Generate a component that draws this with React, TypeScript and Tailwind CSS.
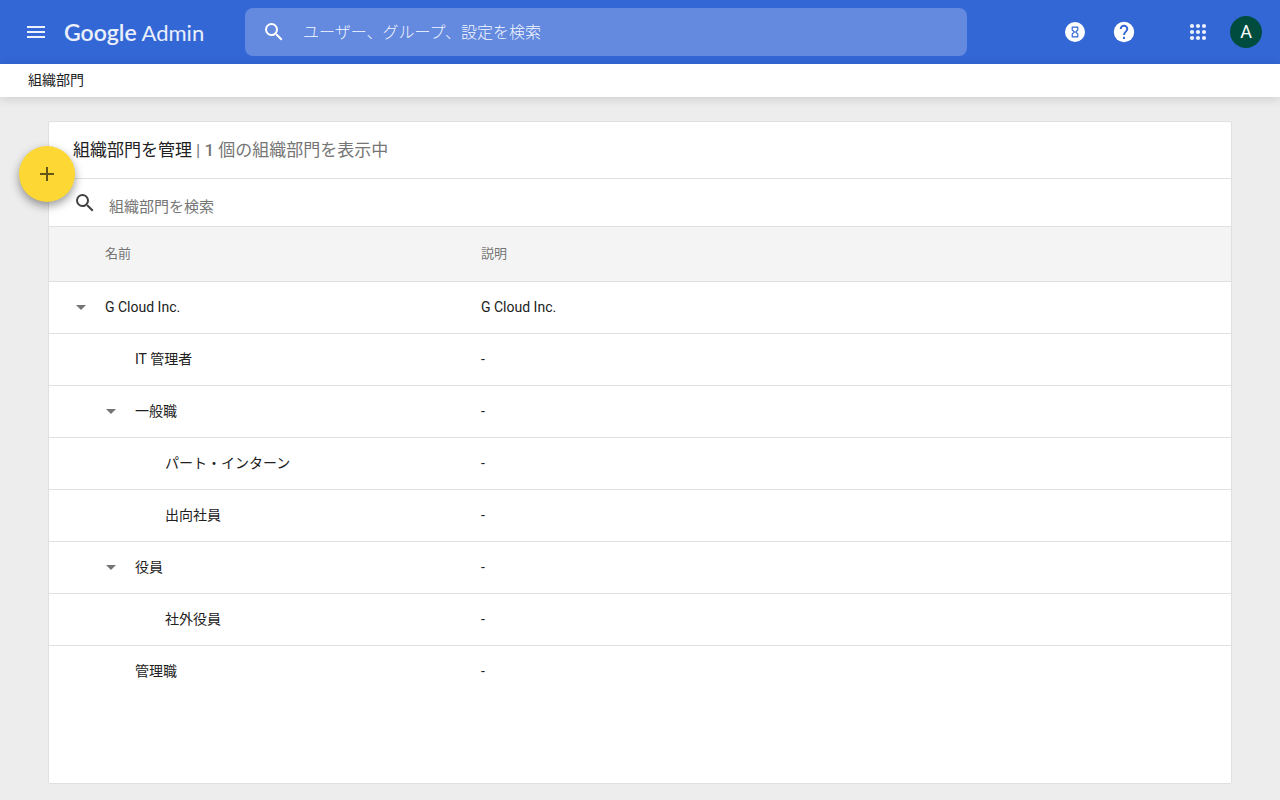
import { MdAdd, MdArrowDropDown, MdMenu, MdSearch } from "react-icons/md";

type OrgUnit = {
  name: string;
  description: string;
  level: 0 | 1 | 2;
  expanded?: boolean;
};

const orgUnits: OrgUnit[] = [
  { name: "G Cloud Inc.", description: "G Cloud Inc.", level: 0, expanded: true },
  { name: "IT 管理者", description: "-", level: 1 },
  { name: "一般職", description: "-", level: 1, expanded: true },
  { name: "パート・インターン", description: "-", level: 2 },
  { name: "出向社員", description: "-", level: 2 },
  { name: "役員", description: "-", level: 1, expanded: true },
  { name: "社外役員", description: "-", level: 2 },
  { name: "管理職", description: "-", level: 1 },
];

const indent = {
  0: "pl-5",
  1: "pl-[50px]",
  2: "pl-20",
};

function HourglassIcon() {
  return (
    <svg viewBox="0 0 24 24" className="size-6" aria-hidden="true">
      <circle cx="12" cy="12" r="10" fill="#fff" />
      <path
        d="M9.2 7.2h5.6v2.6L12.7 12l2.1 2.2v2.6H9.2v-2.6l2.1-2.2-2.1-2.2z"
        fill="none"
        stroke="#3367d6"
        strokeWidth="1.2"
        strokeLinejoin="round"
      />
    </svg>
  );
}

function HelpIcon() {
  return (
    <svg viewBox="0 0 24 24" className="size-6" aria-hidden="true">
      <circle cx="12" cy="12" r="10.2" fill="#fff" />
      <path
        d="M8.7 9a3.3 3.3 0 0 1 6.6 0c0 2.5-3.3 2.8-3.3 6"
        fill="none"
        stroke="#3367d6"
        strokeWidth="1.9"
      />
      <rect x="11" y="16.8" width="2" height="2.2" fill="#3367d6" />
    </svg>
  );
}

function AppsIcon() {
  return (
    <svg viewBox="0 0 24 24" className="size-6" fill="currentColor" aria-hidden="true">
      {[6, 12, 18].map((cy) =>
        [6, 12, 18].map((cx) => <circle key={`${cx}-${cy}`} cx={cx} cy={cy} r="2.1" />)
      )}
    </svg>
  );
}

function Header() {
  return (
    <header className="flex h-16 items-center bg-[#3367d6] pr-[18px] pl-6 text-white">
      <div className="flex w-[221px] shrink-0 items-center gap-4">
        <button type="button" aria-label="メインメニュー" className="text-white/90">
          <MdMenu className="size-6" />
        </button>
        <a
          href="#"
          className="font-['Lato','Liberation_Sans',sans-serif] text-[22px] leading-8 whitespace-nowrap text-white/90"
        >
          <span className="text-[23px] font-semibold">Google</span> Admin
        </a>
      </div>

      <label className="flex h-12 max-w-[722px] flex-1 items-center gap-[17px] rounded-lg bg-[#648adf] pl-[17px]">
        <MdSearch className="size-6 shrink-0" />
        <input
          type="text"
          aria-label="検索"
          placeholder="ユーザー、グループ、設定を検索"
          className="h-full min-w-0 flex-1 bg-transparent text-base font-light outline-none placeholder:text-white/95"
        />
      </label>

      <div className="ml-auto flex items-center">
        <button type="button" aria-label="タスク">
          <HourglassIcon />
        </button>
        <button type="button" aria-label="ヘルプ" className="ml-[25px]">
          <HelpIcon />
        </button>
        <button type="button" aria-label="アプリ" className="ml-[50px] text-white/90">
          <AppsIcon />
        </button>
        <button
          type="button"
          aria-label="アカウント"
          className="ml-5 flex size-8 items-center justify-center rounded-full bg-[#004d40] text-lg"
        >
          A
        </button>
      </div>
    </header>
  );
}

function OrgUnitRow({ unit }: { unit: OrgUnit }) {
  return (
    <tr className="group h-[52px]">
      <td className="border-b border-[#e0e0e0] p-0 pb-0.5 group-last:border-b-0">
        <div className={`flex items-center gap-3 ${indent[unit.level]}`}>
          {unit.expanded ? (
            <button type="button" aria-label={`${unit.name}を折りたたむ`} className="text-[#757575]">
              <MdArrowDropDown className="size-6" />
            </button>
          ) : (
            <span className="size-6" />
          )}
          <span>{unit.name}</span>
        </div>
      </td>
      <td className="border-b border-[#e0e0e0] p-0 pb-0.5 group-last:border-b-0">{unit.description}</td>
    </tr>
  );
}

export default function App() {
  return (
    <div className="flex min-h-screen flex-col bg-[#ededed] font-['Roboto','Noto_Sans_CJK_JP',sans-serif] text-sm text-[#212121]">
      <Header />
      <nav className="flex h-[33px] items-center bg-white px-7 pb-0.5 shadow-[0_2px_10px_rgba(0,0,0,0.14)]">
        <a href="#">組織部門</a>
      </nav>

      <main className="flex flex-1 flex-col px-12 pt-6 pb-4">
        <section className="relative flex-1 rounded-xs border border-[#e0e0e0] bg-white">
          <button
            type="button"
            aria-label="組織部門を作成"
            className="absolute top-6 -left-[30px] flex size-14 items-center justify-center rounded-full bg-[#fdd835] text-black/60 shadow-[0_4px_10px_rgba(0,0,0,0.4)]"
          >
            <MdAdd className="size-6" />
          </button>

          <h1 className="flex h-[57px] items-center border-b border-[#e0e0e0] px-6 text-[17px]">
            <span>組織部門を管理</span>
            <span className="ml-1 text-[#757575]">
              | <b className="font-medium">1</b> 個の組織部門を表示中
            </span>
          </h1>

          <label className="flex h-12 items-center gap-3 border-b border-[#e0e0e0] pl-6">
            <MdSearch className="size-6 shrink-0 text-[#424242]" />
            <input
              type="text"
              aria-label="組織部門を検索"
              placeholder="組織部門を検索"
              className="h-full min-w-0 flex-1 bg-transparent pt-2 text-[15px] outline-none placeholder:text-[#757575]"
            />
          </label>

          <table className="w-full table-fixed border-separate border-spacing-0 text-left">
            <thead className="bg-[#f4f4f4] text-[13px] text-[#757575]">
              <tr className="h-[55px]">
                <th className="w-[432px] border-b border-[#e0e0e0] p-0 pl-14 font-normal">名前</th>
                <th className="border-b border-[#e0e0e0] p-0 font-normal">説明</th>
              </tr>
            </thead>
            <tbody>
              {orgUnits.map((unit) => (
                <OrgUnitRow key={unit.name} unit={unit} />
              ))}
            </tbody>
          </table>
        </section>
      </main>
    </div>
  );
}
